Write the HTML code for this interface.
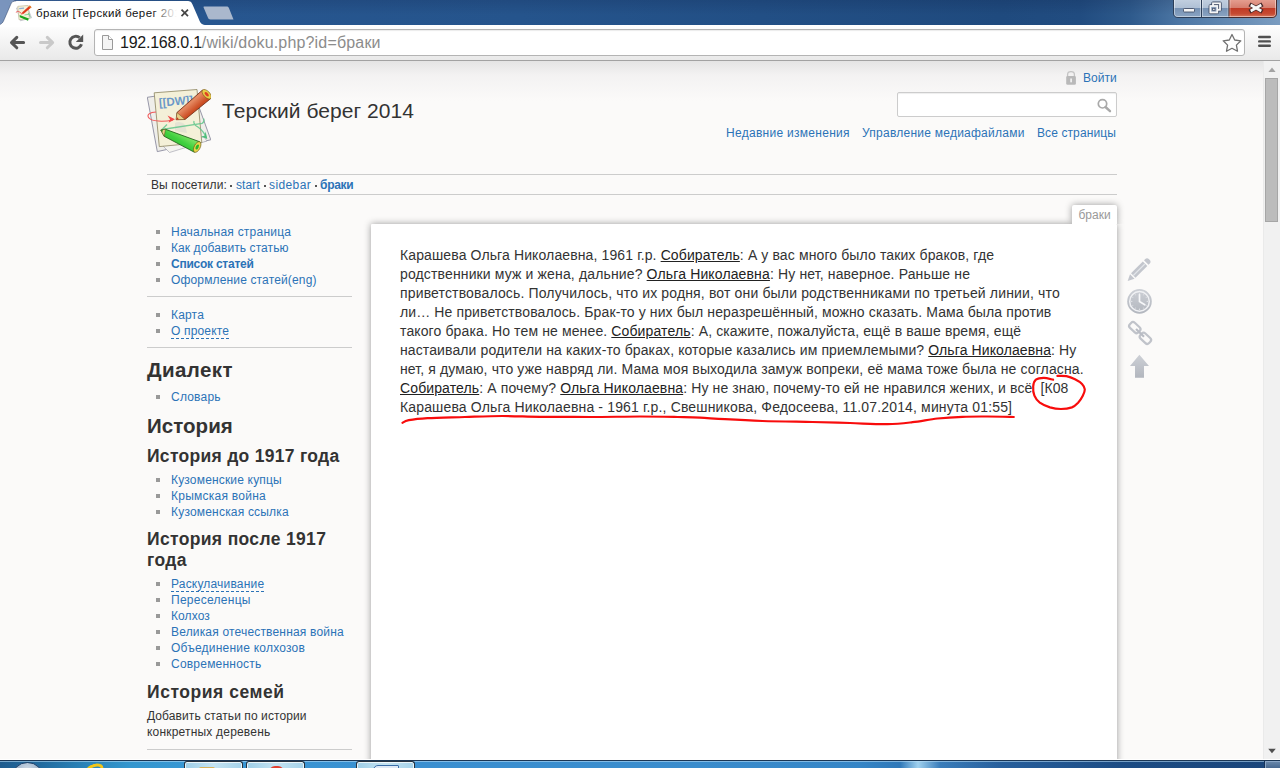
<!DOCTYPE html>
<html lang="ru">
<head>
<meta charset="utf-8">
<title>браки [Терский берег 2014]</title>
<style>
*{box-sizing:border-box;margin:0;padding:0}
html,body{width:1280px;height:768px;overflow:hidden;background:#fbfaf9;font-family:"Liberation Sans",Arial,sans-serif;color:#333}
a{color:#2b73b7;text-decoration:none}
#win{position:absolute;left:0;top:0;width:1280px;height:768px;overflow:hidden}
/* ---------- window chrome ---------- */
#titlebar{position:absolute;left:0;top:0;width:1280px;height:25px;
 background:linear-gradient(90deg,#6e8cb8 0,#3b659c 30px,#27568f 200px,#25548c 520px,#1f4a7e 1000px,#214c80 1080px,#2e5a8c 1130px,#4c76a4 1180px,#7a9cc0 1280px)}
#titlebar:after{content:"";position:absolute;left:0;top:0;width:100%;height:100%;background:linear-gradient(180deg,rgba(0,0,30,.12),rgba(255,255,255,0) 60%)}
#tab{position:absolute;left:0;top:0;width:240px;height:27px}
#tabtitle{position:absolute;left:36px;top:5px;width:141px;height:17px;overflow:hidden;white-space:nowrap;font-size:11.500px;line-height:17px;color:#111;letter-spacing:.4px}
#tabtitle:after{content:"";position:absolute;right:0;top:0;width:26px;height:17px;background:linear-gradient(90deg,rgba(255,255,255,0),#fff)}
#tabclose{position:absolute;left:180px;top:9px;width:9px;height:9px}
#winbtns{position:absolute;left:1173px;top:0;width:106px;height:20px}
#toolbar{position:absolute;left:0;top:25px;width:1280px;height:36px;background:linear-gradient(180deg,#fff 0,#fbfbfb 5px,#e9e9e9 100%);border-bottom:1px solid #a2a2a2}
#omni{position:absolute;left:94px;top:4px;width:1151px;height:27px;background:#fff;border:1px solid #b4b4b4;border-radius:3px;box-shadow:inset 0 1px 1px rgba(0,0,0,.08)}
#url{position:absolute;left:25px;top:2px;font-size:16px;line-height:21px;color:#8c8c8c;white-space:nowrap;letter-spacing:.17px}
#url b{font-weight:normal;color:#1a1a1a;letter-spacing:-.25px}
/* ---------- page ---------- */
#page{position:absolute;left:0;top:61px;width:1263px;height:699px;overflow:hidden;background:#fbfaf9}
#pgrad{position:absolute;left:0;top:0;width:1263px;height:50px;background:linear-gradient(180deg,#e4e4e4 0,#f3f2f2 14px,#fbfaf9 40px)}
#scroll{position:absolute;left:1263px;top:61px;width:17px;height:698px;background:#f1f1f1;border-left:1px solid #eaeaea}
#thumb{position:absolute;left:1px;top:17px;width:13px;height:144px;background:#bcbcbc;border:1px solid #a6a6a6}
#winbottom{position:absolute;left:0;top:759px;width:1280px;height:1px;background:#fff}
#taskbar{position:absolute;left:0;top:760px;width:1280px;height:8px;overflow:hidden;background:linear-gradient(90deg,#1f5c8e 0,#216a9e 40px,#2b86bb 90px,#3396ce 130px,#3997d4 200px,#3a8fd0 420px,#3a8ccc 700px,#3585c6 860px,#2f78b8 900px,#9fd0ee 918px,#3a7dba 940px,#275f9c 1000px,#1c4c84 1120px,#1a457a 1280px);border-top:1px solid #1b3654}
.tbhl{position:absolute;left:0;top:0;width:1280px;height:1px;background:rgba(190,225,250,.55)}
.tbbtn{position:absolute;top:0;width:59px;height:10px;border:1px solid #26323f;border-bottom:0;border-radius:3px 3px 0 0;background:linear-gradient(90deg,#9fcfe8,#c4e3f2 50%,#a6d3ea);box-shadow:inset 0 0 0 1px rgba(255,255,255,.75);overflow:hidden}
.tbbtn i{position:absolute;display:block}
#orb{position:absolute;left:11px;top:1px;width:33px;height:33px;border-radius:50%;background:radial-gradient(circle at 50% 25%,#d3dde8 0,#a9bdd2 35%,#6f8daf 100%);border:1.500px solid #1f4068}
#ieico{position:absolute;left:85px;top:3px;width:19px;height:12px;border:3px solid #f2c618;border-radius:50%;border-bottom-color:transparent;border-left-color:transparent;transform:rotate(-20deg)}
#showdesk{position:absolute;left:1265px;top:0;width:15px;height:10px;border:1px solid #8aa6c6;border-right:0;background:linear-gradient(180deg,#6685a8,#3d5f88);box-shadow:-1px 0 0 #16335a}
.abs{position:absolute;white-space:nowrap}
/* header */
#sitetitle{left:222px;top:37.500px;letter-spacing:.05px;font-size:21px;line-height:24px;color:#333}
#login{left:1083px;top:9px;font-size:12px;line-height:16px}
#search{position:absolute;left:897px;top:31px;width:220px;height:25px;background:#fff;border:1px solid #ccc;border-radius:2px;box-shadow:inset 0 1px 1px #eee}
.toplinks{font-size:12px;line-height:16px}
#crumbs{position:absolute;left:147px;top:113px;width:970px;height:21px;border-top:1px solid #ccc;border-bottom:1px solid #ccc;font-size:12px;line-height:19px;color:#333;white-space:nowrap}
#crumbs span,#crumbs a{position:absolute;top:1px}
#bc0{left:4px}
.bcsep{position:absolute;top:10px;width:2px;height:2px;background:#555}
/* sidebar */
#side{position:absolute;left:147px;top:150px;width:205px;font-size:12px;line-height:16px;color:#333}
#side ul{list-style:none;margin:0;padding:0}
#side li{position:relative;padding-left:24px;height:16px;white-space:nowrap}
#side li:before{content:"";position:absolute;left:9px;top:6px;width:4px;height:4px;background:#999}
#side hr{border:0;border-top:1px solid #ccc;height:0;margin:0}
#side h1{font-size:20.5px;line-height:24px;white-space:nowrap;font-weight:bold;color:#333}
#side h2{position:relative;top:1px;font-size:17.5px;line-height:21px;white-space:nowrap;font-weight:bold;color:#333}
.wl2{border-bottom:1px dashed #2b73b7}
/* content */
#content{position:absolute;left:371px;top:163px;width:746px;height:560px;background:#fff;box-shadow:0 0 7px #999;border-radius:1px}
#pageid{position:absolute;left:1072px;top:144px;width:45px;height:19px;background:#fff;box-shadow:0 0 7px #999;font-size:12px;line-height:20px;color:#999;text-align:center;border-radius:2px 2px 0 0;clip-path:inset(-12px -12px 0 -12px)}
#text{position:absolute;left:400px;top:185px;width:700px;font-size:14px;line-height:19px;color:#333}
#text div{white-space:nowrap;height:19px}
#text u{text-decoration:underline;color:#222}
</style>
</head>
<body>
<div id="win">

<!-- ====== page ====== -->
<div id="page">
 <div id="pgrad"></div>
 <svg id="logo" width="64" height="64" viewBox="0 0 64 64" style="position:absolute;left:147px;top:28px">
  <defs>
   <linearGradient id="lgr" x1="0" y1="0" x2="1" y2="1"><stop offset="0" stop-color="#b8401a"/><stop offset=".42" stop-color="#e58a62"/><stop offset=".6" stop-color="#cc4e24"/><stop offset="1" stop-color="#9a3212"/></linearGradient>
   <linearGradient id="lgg" x1="0" y1="1" x2="1" y2="0"><stop offset="0" stop-color="#1e9a1e"/><stop offset=".5" stop-color="#3fd03f"/><stop offset=".75" stop-color="#8ee86e"/><stop offset="1" stop-color="#2fb82f"/></linearGradient>
  </defs>
  <path d="M0.300 8.300 L46 1.500 L63.800 50.800 L10.300 62.600 Z" fill="#efeeea" stroke="#7f7f96" stroke-width=".8"/>
  <path d="M14 55 L57 48 L60 52 L22.500 63.500 Z" fill="#f4f3ef" stroke="#9a9aa8" stroke-width=".6"/>
  <path d="M7.200 3.800 L50 0.500 L54.800 53.500 L12.300 57.600 Z" fill="#f4f0d8" stroke="#8c845f" stroke-width=".8"/>
  <path d="M28 34 C31 32 36 33 38 36 L40 44 L28 42 Z" fill="#d8d8d0" opacity=".55"/>
  <text x="12.300" y="17.600" font-family="'Liberation Sans',sans-serif" font-weight="bold" font-size="11.500" fill="#6b98c8" transform="rotate(-5 12 17)" letter-spacing="-.1">[[DW]]</text>
  <path d="M9 23 C3 23 -1 26 2 29 C5 32.500 16 33 26 31" fill="none" stroke="#f05858" stroke-width="1.100"/>
  <path d="M20.500 26.500 L28 30.300 L21.500 33.800 L23 30.300 Z" fill="#f04848"/>
  <path d="M15 40.500 L20 35.500 M15 40.500 L55 34.500 C57 33 57.500 31 56.500 29.500 M47 32 C46 36 50 37.500 51 38 C55 41 58 45 59.500 49" fill="none" stroke="#62c68c" stroke-width="1.300" opacity=".85"/>
  <path d="M54 47.500 L60.300 50 L58.600 42.500 L57.600 46.700 Z" fill="#4fbf7c"/>
  <!-- red pencil -->
  <path d="M30 23.500 L55.500 1 L63.800 9.500 L38 30.500 L29.300 30.600 Z" fill="url(#lgr)" stroke="#6a2610" stroke-width=".8" stroke-linejoin="round"/>
  <path d="M30 23.500 L38 30.500 L29 30.700 Z" fill="#e6cf86" stroke="#6a4a20" stroke-width=".5"/>
  <path d="M29 30.700 L30.200 28.300 L32 30.600 Z" fill="#c03a20"/>
  <ellipse cx="59.700" cy="5.200" rx="5.900" ry="3.100" transform="rotate(46 59.700 5.200)" fill="#e9cd4a" stroke="#7a5a10" stroke-width=".6"/>
  <ellipse cx="59.700" cy="5.200" rx="2.700" ry="1.400" transform="rotate(46 59.700 5.200)" fill="#e04020"/>
  <!-- green pencil -->
  <path d="M18.500 40.300 L52.800 52.800 L47.500 63.300 L17.200 47.300 L13.800 41 Z" fill="url(#lgg)" stroke="#14560f" stroke-width=".8" stroke-linejoin="round"/>
  <path d="M13.800 41 L18.500 40.300 L17.200 47.300 Z" fill="#e6cf86" stroke="#5a4a20" stroke-width=".5"/>
  <path d="M13.800 41 L15.800 40.800 L15.200 43.300 Z" fill="#1e8a1e"/>
  <ellipse cx="50.200" cy="58" rx="5.800" ry="3" transform="rotate(-63 50.200 58)" fill="#e9d44a" stroke="#6a5a10" stroke-width=".6"/>
  <ellipse cx="50.200" cy="58" rx="2.700" ry="1.400" transform="rotate(-63 50.200 58)" fill="#28b828"/>
 </svg>
 <div class="abs" id="sitetitle">Терский берег 2014</div>
 <svg width="12" height="16" style="position:absolute;left:1065px;top:9px">
  <path d="M2.600 7 L2.600 4.400 C2.600 2.400 3.800 1.600 6 1.600 C8.200 1.600 9.400 2.400 9.400 4.400 L9.400 7" fill="none" stroke="#c4c4c4" stroke-width="1.300"/>
  <rect x="1.200" y="6" width="9.700" height="8.800" rx="1.400" fill="#b9b9b9"/>
  <rect x="5.300" y="8.500" width="1.600" height="3.800" fill="#f6f6f6"/>
 </svg>
 <div class="abs" id="login"><a>Войти</a></div>
 <div id="search"><svg width="18" height="18" style="position:absolute;left:196px;top:4px">
  <circle cx="8.500" cy="6.800" r="4.200" fill="none" stroke="#a9a9a9" stroke-width="1.700"/>
  <path d="M11.500 10 L16 14.200" stroke="#a9a9a9" stroke-width="2.400" stroke-linecap="round"/>
 </svg></div>
 <div class="abs toplinks" style="left:726px;top:64px;letter-spacing:.285px"><a>Недавние изменения</a></div>
 <div class="abs toplinks" style="left:862px;top:64px;letter-spacing:.245px"><a>Управление медиафайлами</a></div>
 <div class="abs toplinks" style="left:1037px;top:64px;letter-spacing:.1px"><a>Все страницы</a></div>
 <div id="crumbs"><span id="bc0" style="letter-spacing:.11px">Вы посетили:</span><i class="bcsep" style="left:83px"></i><a id="bc1" style="left:89px;letter-spacing:.12px">start</a><i class="bcsep" style="left:117px"></i><a id="bc2" style="left:122px;letter-spacing:.4px">sidebar</a><i class="bcsep" style="left:168px"></i><a id="bc3" style="left:173px;letter-spacing:-.28px"><b>браки</b></a></div>

 <div id="side">
  <div style="height:13px"></div>
  <ul>
   <li><a style="letter-spacing:0.225px">Начальная страница</a></li>
   <li><a style="letter-spacing:0.091px">Как добавить статью</a></li>
   <li><a style="letter-spacing:-0.243px"><b>Список статей</b></a></li>
   <li><a style="letter-spacing:0.148px">Оформление статей(eng)</a></li>
  </ul>
  <div style="height:8px"></div><hr><div style="height:10px"></div>
  <ul>
   <li><a style="letter-spacing:0.182px">Карта</a></li>
   <li><a class="wl2" style="letter-spacing:0.160px">О проекте</a></li>
  </ul>
  <div style="height:8px"></div><hr><div style="height:10px"></div>
  <h1 style="letter-spacing:0.417px">Диалект</h1>
  <div style="height:7px"></div>
  <ul><li><a style="letter-spacing:0.213px">Словарь</a></li></ul>
  <div style="height:8px"></div>
  <h1 style="letter-spacing:0.045px;position:relative;top:1px">История</h1>
  <div style="height:8px"></div>
  <h2 style="letter-spacing:0.289px">История до 1917 года</h2>
  <div style="height:6px"></div>
  <ul>
   <li><a style="letter-spacing:0.171px">Кузоменские купцы</a></li>
   <li><a style="letter-spacing:0.252px">Крымская война</a></li>
   <li><a style="letter-spacing:0.193px">Кузоменская ссылка</a></li>
  </ul>
  <div style="height:8px"></div>
  <h2 style="letter-spacing:0.347px">История после 1917<br>года</h2>
  <div style="height:6px"></div>
  <ul>
   <li><a class="wl2" style="letter-spacing:0.182px">Раскулачивание</a></li>
   <li><a style="letter-spacing:0.273px">Переселенцы</a></li>
   <li><a style="letter-spacing:0.110px">Колхоз</a></li>
   <li><a style="letter-spacing:0.175px">Великая отечественная война</a></li>
   <li><a style="letter-spacing:0.221px">Объединение колхозов</a></li>
   <li><a style="letter-spacing:0.215px">Современность</a></li>
  </ul>
  <div style="height:9px"></div>
  <h2 style="letter-spacing:0.550px">История семей</h2>
  <div style="height:6px"></div>
  <div class="para"><span style="letter-spacing:0.089px">Добавить статьи по истории</span><br><span style="letter-spacing:0.191px">конкретных деревень</span></div>
  <div style="height:9px"></div><hr>
 </div>

 <svg id="ptools" width="30" height="124" viewBox="0 0 30 124" style="position:absolute;left:1125px;top:195px">
  <defs><linearGradient id="tg" x1="0" y1="0" x2="0" y2="1"><stop offset="0" stop-color="#cdd0d6"/><stop offset="1" stop-color="#b2b6be"/></linearGradient></defs>
  <!-- pencil -->
  <g fill="#c3c6cd">
   <path d="M2.700 25 L5 18.300 L9.500 22.800 Z"/>
   <path d="M6 17.300 L17.800 5.500 L22.300 10 L10.500 21.800 Z"/>
   <path d="M19 4.300 L20.300 3 C21.300 2 22.800 2 23.800 3 L24.800 4 C25.800 5 25.800 6.500 24.800 7.500 L23.500 8.800 Z"/>
  </g>
  <path d="M8.300 19.500 L19.800 8" stroke="#e4e6ea" stroke-width="1.100"/>
  <!-- clock -->
  <circle cx="14.500" cy="45.400" r="12.300" fill="url(#tg)"/>
  <circle cx="14.500" cy="45.400" r="9.800" fill="none" stroke="#f0f1f4" stroke-width="1.500"/>
  <path d="M14.500 38.500 L14.500 45.600 L19.800 48.800" fill="none" stroke="#f6f7f9" stroke-width="1.700" stroke-linecap="round"/>
  <g fill="#e3e5e9"><circle cx="14.500" cy="37.600" r=".7"/><circle cx="14.500" cy="53.200" r=".7"/><circle cx="6.700" cy="45.400" r=".7"/><circle cx="22.300" cy="45.400" r=".7"/><circle cx="10.600" cy="38.700" r=".5"/><circle cx="18.400" cy="38.700" r=".5"/><circle cx="7.800" cy="41.500" r=".5"/><circle cx="21.200" cy="41.500" r=".5"/><circle cx="7.800" cy="49.300" r=".5"/><circle cx="21.200" cy="49.300" r=".5"/><circle cx="10.600" cy="52.100" r=".5"/><circle cx="18.400" cy="52.100" r=".5"/></g>
  <!-- chain -->
  <g fill="none" stroke="#c0c3ca" stroke-width="2.200">
   <rect x="-5.900" y="-3.500" width="11.800" height="7" rx="2.600" transform="translate(9.800 71.600) rotate(43)"/>
   <rect x="-5.900" y="-3.500" width="11.800" height="7" rx="2.600" transform="translate(20.400 82.300) rotate(43)"/>
  </g>
  <path d="M11 73 L19 80.800" stroke="#b9bcc4" stroke-width="2.200" stroke-linecap="butt"/>
  <!-- up arrow -->
  <path d="M14.400 98.800 L24 110 L19 110 L19 121.800 L10 121.800 L10 110 L5 110 Z" fill="url(#tg)"/>
 </svg>
 <div id="content"></div>
 <div id="pageid">браки</div>

 <div id="text">
  <div style="letter-spacing:0.119px">Карашева Ольга Николаевна, 1961 г.р. <u>Собиратель</u>: А у вас много было таких браков, где</div>
  <div style="letter-spacing:0.141px">родственники муж и жена, дальние? <u>Ольга Николаевна</u>: Ну нет, наверное. Раньше не</div>
  <div style="letter-spacing:0.152px">приветствовалось. Получилось, что их родня, вот они были родственниками по третьей линии, что</div>
  <div style="letter-spacing:0.114px">ли… Не приветствовалось. Брак-то у них был неразрешённый, можно сказать. Мама была против</div>
  <div style="letter-spacing:0.126px">такого брака. Но тем не менее. <u>Собиратель</u>: А, скажите, пожалуйста, ещё в ваше время, ещё</div>
  <div style="letter-spacing:0.109px">настаивали родители на каких-то браках, которые казались им приемлемыми? <u>Ольга Николаевна</u>: Ну</div>
  <div style="letter-spacing:0.126px">нет, я думаю, что уже навряд ли. Мама моя выходила замуж вопреки, её мама тоже была не согласна.</div>
  <div style="letter-spacing:0.117px"><u>Собиратель</u>: А почему? <u>Ольга Николаевна</u>: Ну не знаю, почему-то ей не нравился жених, и всё&nbsp; [К08</div>
  <div style="letter-spacing:0.151px">Карашева Ольга Николаевна - 1961 г.р., Свешникова, Федосеева, 11.07.2014, минута 01:55]</div>
 </div>
 <svg id="annot" width="720" height="70" viewBox="0 0 720 70" style="position:absolute;left:390px;top:300px;overflow:visible">
  <g fill="none" stroke="#f80c0c" stroke-width="2.200" stroke-linecap="round" stroke-linejoin="round">
   <path d="M12.5 61.8 C13.5 61.3 14.6 60.0 18.8 59.2 C22.9 58.5 28.1 57.8 37.5 57.2 C46.9 56.7 62.5 56.4 75.0 56.0 C87.5 55.6 100.0 55.0 112.5 55.0 C125.0 55.0 135.4 55.6 150.0 55.8 C164.6 55.9 183.3 56.0 200.0 56.0 C216.7 56.0 235.4 55.5 250.0 55.5 C264.6 55.5 277.5 55.8 287.5 56.0 C297.5 56.2 302.1 56.2 310.0 56.6 C317.9 57.0 324.6 57.7 335.0 58.2 C345.4 58.8 357.9 59.5 372.5 60.0 C387.1 60.5 407.9 60.7 422.5 61.0 C437.1 61.3 447.5 61.6 460.0 62.0 C472.5 62.4 487.1 63.4 497.5 63.2 C507.9 63.1 514.2 62.2 522.5 61.2 C530.8 60.3 539.2 58.4 547.5 57.5 C555.8 56.6 564.2 56.1 572.5 55.8 C580.8 55.4 589.0 55.5 597.5 55.5 C606.0 55.5 619.4 55.9 623.8 56.0"/>
   <path d="M663.1 18.7 C661.5 18.4 656.6 16.9 653.8 16.9 C650.9 16.9 647.7 17.3 645.9 18.7 C644.1 20.1 643.5 22.6 643.2 25.3 C643.0 28.0 643.3 32.0 644.4 34.7 C645.5 37.4 647.2 39.7 649.8 41.7 C652.4 43.6 656.5 45.3 660.0 46.4 C663.5 47.4 667.3 48.0 670.9 48.0 C674.6 48.0 679.0 47.4 681.9 46.4 C684.8 45.3 686.3 43.6 688.1 41.7 C689.9 39.7 691.7 36.9 692.8 34.7 C693.9 32.5 694.9 30.3 694.8 28.4 C694.7 26.4 693.6 24.7 692.0 23.0 C690.4 21.3 687.6 19.6 685.0 18.3 C682.4 17.0 679.3 15.8 676.4 15.2 C673.5 14.6 668.9 14.9 667.4 14.9"/>
  </g>
 </svg>
</div>

<!-- ====== scrollbar ====== -->
<div id="scroll"><div id="thumb"></div>
 <svg width="16" height="699" style="position:absolute;left:0;top:0">
  <path d="M4.400 11 L8 6.600 L11.600 11 Z" fill="#a3a3a3"/>
  <path d="M4.200 687.800 L11.800 687.800 L8 692.200 Z" fill="#505050"/>
 </svg></div>

<!-- ====== chrome ====== -->
<div id="titlebar"></div>
<div id="toolbar">
 <svg width="94" height="35" style="position:absolute;left:0;top:0">
  <g fill="none" stroke="#555" stroke-width="3" stroke-linecap="round" stroke-linejoin="round">
   <path d="M16.800 12.400 L11.500 17.600 L16.800 22.800 M12.500 17.600 L23.600 17.600"/>
  </g>
  <g fill="none" stroke="#c9c9c9" stroke-width="3" stroke-linecap="round" stroke-linejoin="round">
   <path d="M47.300 12.400 L52.600 17.600 L47.300 22.800 M51.600 17.600 L40.500 17.600"/>
  </g>
  <path d="M79.700 12.700 A6 6 0 1 0 81.500 19.300" fill="none" stroke="#555" stroke-width="3"/>
  <path d="M83.200 9.600 L83.200 17 L75.800 17 Z" fill="#555"/>
 </svg>
 <div id="omni">
  <svg width="14" height="18" style="position:absolute;left:6px;top:4px">
   <path d="M1.5 1.5 L7.5 1.5 L11.5 5.5 L11.5 15.5 L1.5 15.5 Z" fill="#f4f4f4" stroke="#9a9a9a" stroke-width="1"/>
   <path d="M7.5 1.5 L7.5 5.5 L11.5 5.5" fill="#fff" stroke="#9a9a9a" stroke-width="1"/>
  </svg>
  <div id="url"><b>192.168.0.1</b>/wiki/doku.php?id=браки</div>
  <svg width="22" height="22" style="position:absolute;left:1126px;top:2px">
   <path d="M11 2.500 L13.700 8 L19.800 8.800 L15.400 13.100 L16.500 19.200 L11 16.300 L5.500 19.200 L6.600 13.100 L2.200 8.800 L8.300 8 Z" fill="#fff" stroke="#707070" stroke-width="1.300" stroke-linejoin="round"/>
  </svg>
 </div>
 <svg width="16" height="16" style="position:absolute;left:1257px;top:9px">
  <g stroke="#505050" stroke-width="2.4" stroke-linecap="round"><path d="M2.2 3 H12.8 M2.2 7.4 H12.8 M2.2 11.8 H12.8"/></g>
 </svg>
</div>
<div id="tab">
 <svg width="240" height="27" style="position:absolute;left:0;top:0">
  <path d="M0 25 C3 24.500 4 22 5 19.500 L11.500 4.500 C12.500 2 13.500 0 17 0 L0 0 Z" fill="#7b96be" opacity=".95"/>
  <path d="M-2 25 C2 24.500 3.200 22 4.200 19.500 L10.700 4.500 C11.700 2 12.700 1 16.200 1 L187 1 C190.500 1 191.500 2 192.500 4.500 L199 19.500 C200 22 201 24.500 205 25 L240 25 L240 27 L0 27 Z" fill="#fff"/>
  <path d="M-2 25 C2 24.500 3.200 22 4.200 19.500 L10.700 4.500 C11.700 2 12.700 1 16.200 1" fill="none" stroke="rgba(30,50,90,.45)" stroke-width="1"/>
  <path d="M204.500 6.500 L226.500 6.500 C228 6.500 228.500 7 229 8.200 L233.500 19.500 L210.500 19.500 C209 19.500 208.500 19 208 17.800 L203.600 7.500 C203.300 6.800 203.700 6.500 204.500 6.500 Z" fill="#aab8cd"/>
  <g stroke="#454545" stroke-width="1.700" stroke-linecap="butt"><path d="M181.500 9.700 L188 16.200 M188 9.700 L181.500 16.200"/></g>
  <!-- favicon -->
  <g transform="translate(16,5)">
   <path d="M0.500 3 L11 1 L15.500 12.800 L4.500 15.800 Z" fill="#f1efe8" stroke="#b4b4c0" stroke-width=".7"/>
   <path d="M1.800 1.300 L12.200 0.500 L13.400 13.500 L3 14.700 Z" fill="#f6f1da" stroke="#c2bc9c" stroke-width=".7"/>
   <path d="M3.200 3.600 L8 3.200" stroke="#8fb0d4" stroke-width="1.200"/>
   <path d="M6 7.600 L13.800 0.600 L15.500 2.200 L7.400 9 Z" fill="#df3b1c"/>
   <path d="M13.800 0.600 L15.500 2.200 L14.500 3.100 L12.800 1.500 Z" fill="#e08a2a"/>
   <path d="M6 7.600 L7.400 9 L4.800 9.400 Z" fill="#ee4030"/>
   <path d="M3.600 10 L12.800 13.600 L12 15.700 L3.800 12.200 Z" fill="#1ba51b"/>
   <path d="M0.300 7.500 C0.300 5.800 3 6 5.200 8.300" fill="none" stroke="#ee4a4a" stroke-width=".9"/>
   <path d="M8.500 10 L14 9 M12.300 8 L14.400 12.300" fill="none" stroke="#6fcf8f" stroke-width=".8"/>
  </g>
 </svg>
 <div id="tabtitle">браки [Терский берег 2014]</div>
</div>
<svg id="winbtns" width="106" height="20" viewBox="0 0 106 20">
 <defs>
  <linearGradient id="wb1" x1="0" y1="0" x2="0" y2="1"><stop offset="0" stop-color="#c3d0e0"/><stop offset=".48" stop-color="#afc0d5"/><stop offset=".5" stop-color="#7691b3"/><stop offset="1" stop-color="#8ba5c4"/></linearGradient>
  <linearGradient id="wb2" x1="0" y1="0" x2="0" y2="1"><stop offset="0" stop-color="#e6a193"/><stop offset=".46" stop-color="#d67f6f"/><stop offset=".5" stop-color="#c03a25"/><stop offset=".8" stop-color="#c64a32"/><stop offset="1" stop-color="#d97f64"/></linearGradient>
 </defs>
 <path d="M0.500 -1 L0.500 13 C0.500 16 2 17.500 5 17.500 L56 17.500 L56 -1 Z" fill="url(#wb1)" stroke="#2c3e58" stroke-width="1"/>
 <path d="M56 -1 L56 17.500 L99 17.500 C102 17.500 103.500 16 103.500 13 L103.500 -1 Z" fill="url(#wb2)" stroke="#4a2a2a" stroke-width="1"/>
 <path d="M1.500 0 L1.500 13 C1.500 15.500 2.500 16.500 5 16.500 L99 16.500 C101.500 16.500 102.500 15.500 102.500 13 L102.500 0" fill="none" stroke="rgba(255,255,255,.45)" stroke-width="1"/>
 <path d="M28.500 0 L28.500 17" stroke="#2c3e58" stroke-width="1"/><path d="M29.500 0 L29.500 16.500 M27.500 0 L27.500 16.500" stroke="rgba(255,255,255,.4)" stroke-width="1"/>
 <path d="M55 0 L55 16.500 M57 0 L57 16.500" stroke="rgba(255,255,255,.35)" stroke-width="1"/>
 <rect x="10.500" y="8.500" width="11" height="3.500" rx=".8" fill="#f4f4f4" stroke="#44506a" stroke-width=".9"/>
 <g fill="none" stroke="#3c4862" stroke-width="3.400" stroke-linejoin="round"><rect x="40" y="3.300" width="7" height="6.500"/><rect x="37.300" y="6" width="7" height="6.500"/></g>
 <g fill="none" stroke="#f6f6f6" stroke-width="1.800"><rect x="40" y="3.300" width="7" height="6.500"/></g>
 <rect x="37.300" y="6" width="7" height="6.500" fill="#8fa4c0" stroke="#f6f6f6" stroke-width="1.800"/>
 <rect x="39.600" y="8.300" width="2.400" height="2" fill="#f4f4f4" stroke="#3c4862" stroke-width=".8"/>
 <g stroke="#4a2c2c" stroke-width="4.300" stroke-linecap="butt"><path d="M76.500 4.300 L89.500 11.700 M89.500 4.300 L76.500 11.700"/></g>
 <g stroke="#f8f8f8" stroke-width="2.600" stroke-linecap="butt"><path d="M77.700 5 L88.300 11 M88.300 5 L77.700 11"/></g>
</svg>
<div id="winbottom"></div>
<div id="taskbar">
 <div class="tbhl"></div>
 <div class="tbbtn" style="left:184px"><i style="left:14px;top:5px;width:16px;height:4px;background:#d9b25a;border-radius:2px 2px 0 0"></i></div>
 <div class="tbbtn" style="left:246px"><i style="left:22px;top:4px;width:15px;height:6px;background:#e2402f;border-radius:8px 8px 0 0"></i></div>
 <div class="tbbtn" style="left:356px"><i style="left:16px;top:3px;width:26px;height:6px;background:#dfeaf6;border:1px solid #3b6ea8;border-radius:5px 1px 0 0"></i></div>
 <div id="orb"></div>
 <div id="ieico"></div>
 <div id="showdesk"></div>
</div>
</div>
</body>
</html>
